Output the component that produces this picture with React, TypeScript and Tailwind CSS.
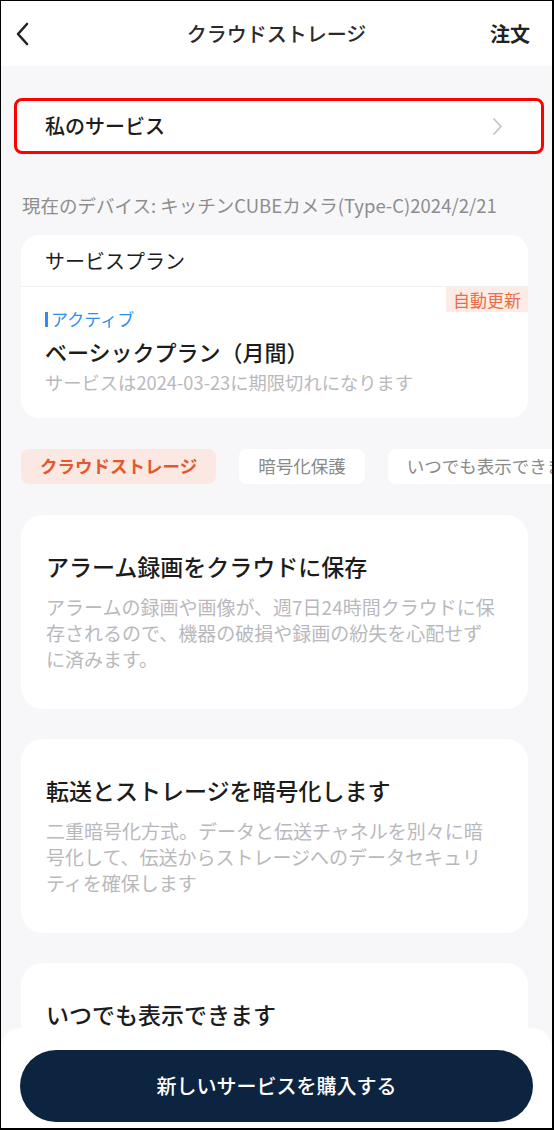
import React from 'react';

const font = { fontFamily: '"Noto Sans CJK JP", "Noto Sans", sans-serif' };

type FeatureCardProps = {
    title: string;
    lines: string[];
};

const FeatureCard: React.FC<FeatureCardProps> = (props) => {
    return (
        <div className="bg-white rounded-[22px] pl-[25px] pr-[20px] pt-[35px] pb-[37px] min-h-[193px] shrink-0">
            <p className="text-[23px] leading-[32px] font-medium text-[#1c1c1c]">{props.title}</p>
            {props.lines.length > 0 && (
                <p className="mt-[12px] text-[19px] leading-[26px] text-[#b9b9bd] whitespace-nowrap">
                    {props.lines.map((line, i) => (
                        <React.Fragment key={i}>
                            {line}
                            {i < props.lines.length - 1 && <br />}
                        </React.Fragment>
                    ))}
                </p>
            )}
        </div>
    );
};

const App: React.FC = () => {
    return (
        <div
            className="relative w-[554px] h-[1130px] overflow-hidden bg-[#f7f7fa] border-l border-t border-r-2 border-b-2 border-black flex flex-col"
            style={font}
        >
            {/* header */}
            <div className="h-[65px] bg-white grid grid-cols-[1fr_auto_1fr] items-center shrink-0">
                <div className="pl-[14px] flex items-center">
                    <svg width="16" height="24" viewBox="0 0 16 24" fill="none">
                        <path d="M12 2 L3 12 L12 22" stroke="#222" strokeWidth="2.6" strokeLinecap="round" strokeLinejoin="round" />
                    </svg>
                </div>
                <p className="text-[20px] text-[#2a2a2a] font-medium">クラウドストレージ</p>
                <p className="text-right pr-[22px] text-[20px] font-bold text-[#222]">注文</p>
            </div>

            {/* my service */}
            <div className="mt-[32px] ml-[13px] w-[530px] h-[56px] shrink-0 bg-white border-[3px] border-[#ff0000] rounded-[8px] flex items-center justify-between pl-[28px] pr-[38px]">
                <p className="text-[20px] font-medium text-[#1c1c1c]">私のサービス</p>
                <svg width="11" height="19" viewBox="0 0 11 19" fill="none">
                    <path d="M2 2 L9 9.5 L2 17" stroke="#c4c4c4" strokeWidth="1.8" strokeLinecap="round" strokeLinejoin="round" />
                </svg>
            </div>

            <p className="mt-[39px] px-[21px] text-[18.5px] leading-[25px] text-[#8d8d8d] whitespace-nowrap shrink-0">
                現在のデバイス: キッチンCUBEカメラ(Type-C)2024/2/21
            </p>

            {/* service plan */}
            <div className="mt-[17px] ml-[20px] w-[507px] bg-white rounded-[18px] shrink-0 overflow-hidden">
                <div className="h-[52px] flex items-center px-[24px] border-b border-[#f1f1f4]">
                    <p className="text-[20px] text-[#1c1c1c]">サービスプラン</p>
                </div>
                <div className="relative px-[24px] pt-[21px] pb-[25px]">
                    <span className="absolute top-0 right-0 h-[25px] px-[7px] flex items-center bg-[#fdece5] text-[#ea6d45] text-[17px]">
                        自動更新
                    </span>
                    <div className="flex items-center">
                        <span className="w-[3px] h-[15px] bg-[#2d8ef0] mr-[3px]" />
                        <p className="text-[17px] leading-[22px] text-[#2d8ef0]">アクティブ</p>
                    </div>
                    <p className="mt-[6px] text-[22px] leading-[30px] font-medium text-[#1c1c1c]">ベーシックプラン（月間）</p>
                    <p className="mt-[5px] text-[18.3px] leading-[22px] text-[#b9b9bd]">サービスは2024-03-23に期限切れになります</p>
                </div>
            </div>

            {/* tabs */}
            <div className="mt-[31px] pl-[20px] flex gap-[23px] shrink-0 whitespace-nowrap">
                <div className="h-[35px] px-[19px] rounded-[8px] bg-[#fce8e2] flex items-center text-[17.5px] font-bold text-[#e5572d]">
                    クラウドストレージ
                </div>
                <div className="h-[35px] px-[19px] rounded-[8px] bg-white flex items-center text-[17.5px] text-[#8a8a8a]">
                    暗号化保護
                </div>
                <div className="h-[35px] px-[19px] rounded-[8px] bg-white flex items-center text-[17.5px] text-[#8a8a8a]">
                    いつでも表示できます
                </div>
            </div>

            {/* features */}
            <div className="mt-[31px] ml-[20px] w-[507px] flex flex-col gap-[30px]">
                <FeatureCard
                    title="アラーム録画をクラウドに保存"
                    lines={[
                        "アラームの録画や画像が、週7日24時間クラウドに保",
                        "存されるので、機器の破損や録画の紛失を心配せず",
                        "に済みます。",
                    ]}
                />
                <FeatureCard
                    title="転送とストレージを暗号化します"
                    lines={[
                        "二重暗号化方式。データと伝送チャネルを別々に暗",
                        "号化して、伝送からストレージへのデータセキュリ",
                        "ティを確保します",
                    ]}
                />
                <FeatureCard title="いつでも表示できます" lines={[]} />
            </div>

            {/* bottom bar */}
            <div className="absolute left-0 right-0 bottom-0 h-[100px] bg-white rounded-t-[20px] px-[19px] pt-[22px]">
                <div className="h-[72px] rounded-full bg-[#0d2440] flex items-center justify-center">
                    <p className="text-[20px] font-medium text-white">新しいサービスを購入する</p>
                </div>
            </div>
        </div>
    );
};

export default App;
